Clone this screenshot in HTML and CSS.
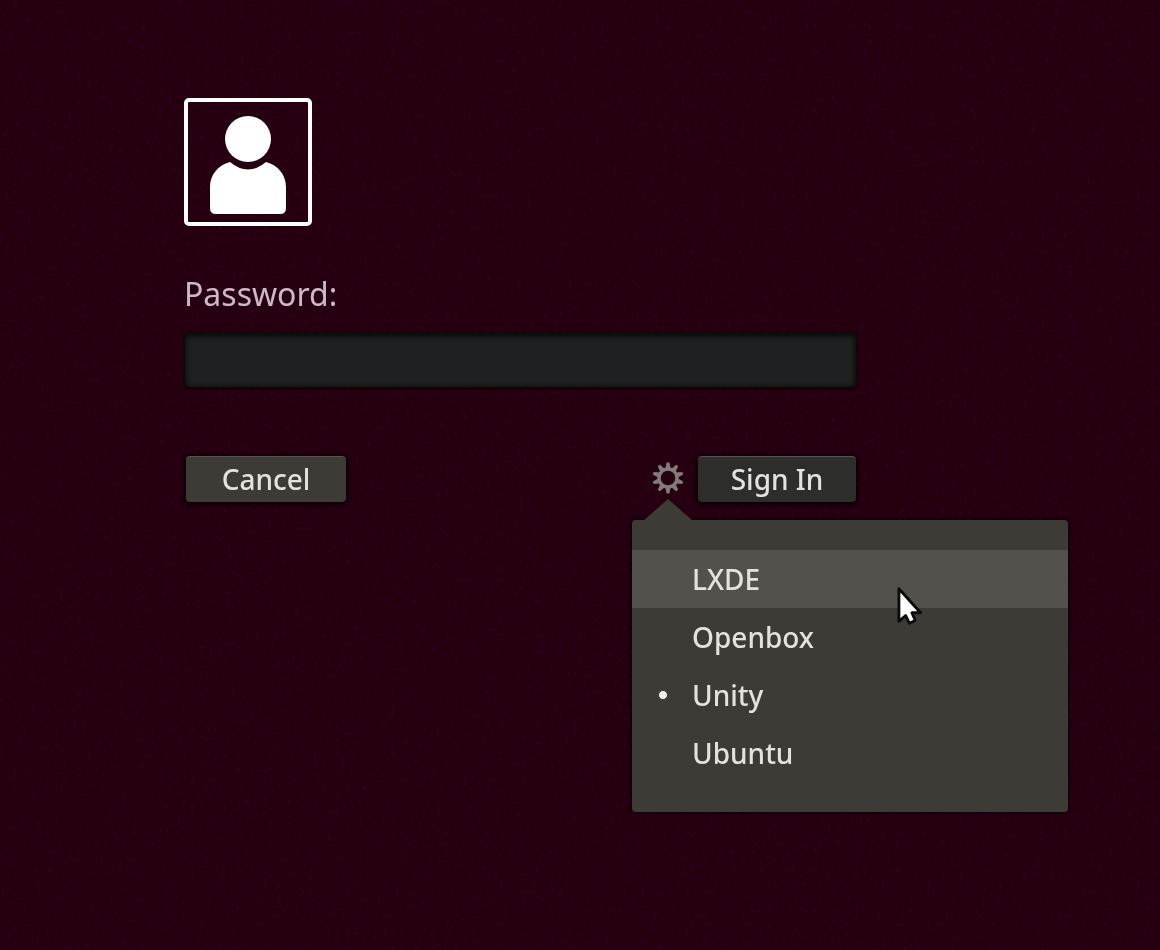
FILE: index.html
```html
<!DOCTYPE html>
<html lang="en">
<head>
<meta charset="utf-8">
<title>Sign In</title>
<link rel="stylesheet" href="styles.css">
</head>
<body>
<svg class="grain" aria-hidden="true">
  <filter id="grain"><feTurbulence type="fractalNoise" baseFrequency="0.22" numOctaves="2" seed="4"/><feColorMatrix values="0 0 0 0 0.3  0 0 0 0 0  0 0 0 0 0.3  1.8 0 0 0 -0.75"/></filter>
  <rect width="100%" height="100%" filter="url(#grain)"/>
</svg>
<main class="greeter">
  <form class="login">
    <div class="avatar">
      <svg viewBox="0 0 120 120" role="img" aria-label="User">
        <circle cx="60" cy="37" r="23"/>
        <path d="M42 60Q60 75 78 60C90 63 98 73 98 85V106Q98 112 92 112H28Q22 112 22 106V85C22 73 30 63 42 60Z"/>
      </svg>
    </div>
    <label class="prompt" for="password">Password:</label>
    <input class="field" id="password" type="password">
    <div class="actions">
      <button class="button" type="button">Cancel</button>
      <div class="session">
        <button class="gear" type="button" aria-label="Choose session" aria-expanded="true">
          <svg viewBox="-16 -16 32 32" aria-hidden="true">
            <circle r="9" fill="none" stroke="currentColor" stroke-width="3.400"/>
            <defs><path id="tooth" d="M-2.600 -9.500L-1.400 -15.500H1.400L2.600 -9.500Z"/></defs>
            <g fill="currentColor">
              <use href="#tooth"/><use href="#tooth" transform="rotate(36)"/><use href="#tooth" transform="rotate(72)"/><use href="#tooth" transform="rotate(108)"/><use href="#tooth" transform="rotate(144)"/><use href="#tooth" transform="rotate(180)"/><use href="#tooth" transform="rotate(216)"/><use href="#tooth" transform="rotate(252)"/><use href="#tooth" transform="rotate(288)"/><use href="#tooth" transform="rotate(324)"/>
            </g>
          </svg>
        </button>
        <div class="menu" role="radiogroup" aria-label="Session">
          <label class="item item-active"><input type="radio" name="session">LXDE</label>
          <label class="item"><input type="radio" name="session">Openbox</label>
          <label class="item"><input type="radio" name="session" checked>Unity</label>
          <label class="item"><input type="radio" name="session">Ubuntu</label>
          <svg class="pointer" viewBox="0 0 26 40" aria-hidden="true">
            <path d="M2 2V36L9 30L13 38L19 35L15.500 27H24.500Z" fill="#fff" stroke="#0b0b0b" stroke-width="3" stroke-linejoin="round"/>
          </svg>
        </div>
      </div>
      <button class="button button-primary" type="submit">Sign In</button>
    </div>
  </form>
</main>
</body>
</html>
```

FILE: styles.css
```css
* {
  box-sizing: border-box;
}

body {
  margin: 0;
  min-height: 100vh;
  background: #24000f;
  color: #e4e2de;
  font-family: "Noto Sans", "Open Sans", sans-serif;
  font-size: 28px;
  font-weight: 500;
}

.grain {
  position: fixed;
  inset: 0;
  width: 100%;
  height: 100%;
  opacity: 0.12;
}

.greeter {
  position: relative;
  padding: 98px 184px;
}

.login {
  display: flex;
  flex-direction: column;
  max-width: 673px;
}

.avatar {
  width: 128px;
  height: 128px;
  border: 4px solid #fff;
  border-radius: 5px;
}

.avatar svg {
  display: block;
  width: 100%;
  fill: #fff;
}

.prompt {
  margin-top: 48px;
  font-size: 32px;
  font-weight: 400;
  line-height: 40px;
  color: #ccb8c6;
}

.field {
  width: 100%;
  height: 56px;
  margin-top: 18px;
  padding: 0 12px;
  border: 1px solid #0c0b0a;
  border-radius: 5px;
  outline: none;
  background: #1f2021;
  box-shadow: inset 0 3px 5px #0c0b0a, inset 0 0 5px #0c0b0a, 0 1px 2px #000;
  color: inherit;
  font: inherit;
}

.actions {
  display: flex;
  align-items: center;
  margin-top: 68px;
  padding: 0 1px 0 2px;
}

.button {
  width: 160px;
  height: 46px;
  padding: 0 0 2px;
  border: 0;
  border-top: 1px solid #5b4f55;
  border-radius: 4px;
  background: #3c3b36;
  box-shadow: 0 1px 4px 2px #090004;
  color: inherit;
  font: inherit;
  line-height: 42px;
}

.button-primary {
  width: 158px;
  background: #2d2d2c;
}

.session {
  position: relative;
  margin-left: auto;
  margin-right: 14px;
  height: 46px;
}

.gear {
  display: flex;
  align-items: center;
  width: 32px;
  height: 44px;
  padding: 0;
  border: 0;
  background: none;
  color: #817b7b;
}

.gear svg {
  width: 32px;
  height: 32px;
}

.menu {
  position: absolute;
  top: 64px;
  left: -20px;
  width: 436px;
  padding: 30px 0;
  border-radius: 4px;
  background: #3c3b36;
  box-shadow: 0 0 4px 1px #0c0006;
}

.menu::before {
  content: "";
  position: absolute;
  top: -21px;
  left: 11px;
  width: 50px;
  height: 22px;
  background: #3c3b36;
  clip-path: polygon(50% 0, 100% 100%, 0 100%);
}

.item {
  display: flex;
  align-items: center;
  gap: 24px;
  height: 58px;
  padding: 0 26px;
}

.item-active {
  background: #52514b;
}

.item input {
  appearance: none;
  width: 10px;
  height: 10px;
  margin: 0;
  border-radius: 50%;
}

.item input:checked {
  background: #f2f1ee;
  border: 1px solid #3c3b36;
}

.pointer {
  position: absolute;
  top: 66px;
  left: 265px;
  width: 25px;
  height: 40px;
}
```
